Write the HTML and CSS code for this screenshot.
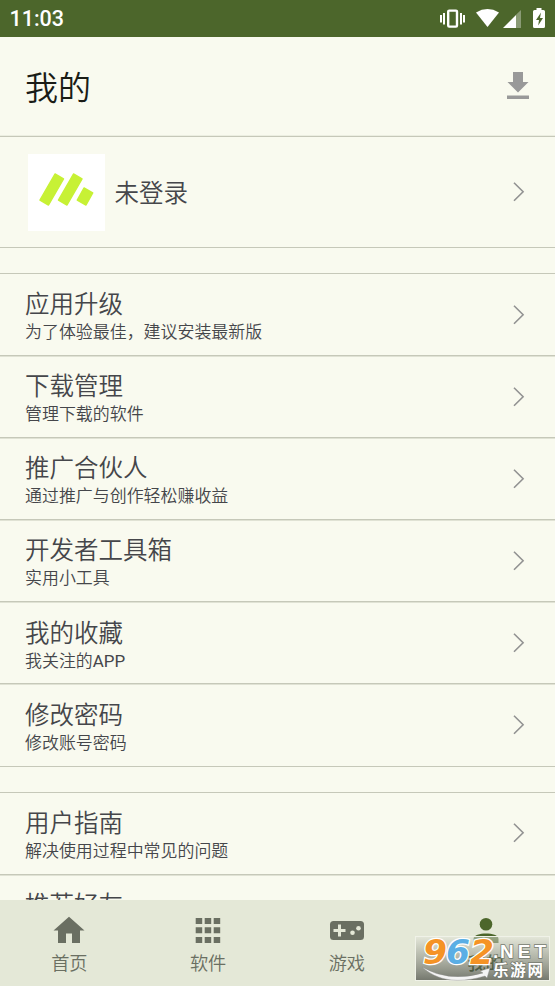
FILE: index.html
```html
<!DOCTYPE html>
<html lang="zh-CN">
<head>
<meta charset="utf-8">
<title>我的</title>
<link rel="stylesheet" href="styles.css">
</head>
<body>
<svg class="defs" width="0" height="0"><symbol id="chev" viewBox="0 0 12 20"><path d="M1 .7 10.100 9.700 1 18.700" fill="none" stroke="#929292" stroke-width="1.600"/></symbol></svg>
<div class="screen">
  <header class="status">
    <span class="time">11:03</span>
    <svg class="status-icons" width="110" height="24" viewBox="438 7 110 24" fill="#fff">
      <path d="M440 15h2v7.500h-2zM443 13h2v11.500h-2zM460 13h2v11.500h-2zM463 15h2v7.500h-2z"/>
      <rect x="448.200" y="10.600" width="8.800" height="16" rx="1" fill="none" stroke="#fff" stroke-width="2.400"/>
      <path d="M476 12.400Q487.500 5.600 499 12.400L487.500 27Z"/>
      <path d="M521 10v18h-5V14.800z" opacity=".35"/><path d="M516 15v13H503z"/>
      <path d="M536.500 8h5v2h2q1.500 0 1.500 1.500v15q0 1.500-1.500 1.500h-9q-1.500 0-1.500-1.500v-15q0-1.500 1.500-1.500h2z"/>
      <path d="M541 12.500 536 20h3l-.8 5.500L543 18h-3z" fill="#4c662b"/>
    </svg>
  </header>
  <div class="topbar">
    <h1>我的</h1>
    <svg width="24" height="28" viewBox="0 0 24 28" fill="#999"><path d="M7 0h10v10h5.500L12 20.500 1.500 10H7zM1 23.500h22v3.500H1z"/></svg>
  </div>
  <div class="profile">
    <svg class="avatar" width="77" height="77" viewBox="0 0 77 77"><path fill="#fff" d="M0 0h77v77H0z"/><g fill="#c7f135" stroke="#c7f135" stroke-width="1.500" stroke-linejoin="round"><path d="M27 20 35.500 25 20.500 51 12 46z"/><path d="M45.500 20 54 25 39 51 30.500 46z"/><path d="M56 34 64.700 39 58 51 49.300 46z"/></g></svg>
    <span class="name">未登录</span>
    <svg class="chev" width="12" height="20"><use href="#chev"/></svg>
  </div>
  <main class="content">
    <section class="group">
      <div class="row"><div><h2>应用升级</h2><p>为了体验最佳，建议安装最新版</p></div><svg class="chev" width="12" height="20"><use href="#chev"/></svg></div>
      <div class="row"><div><h2>下载管理</h2><p>管理下载的软件</p></div><svg class="chev" width="12" height="20"><use href="#chev"/></svg></div>
      <div class="row"><div><h2>推广合伙人</h2><p>通过推广与创作轻松赚收益</p></div><svg class="chev" width="12" height="20"><use href="#chev"/></svg></div>
      <div class="row"><div><h2>开发者工具箱</h2><p>实用小工具</p></div><svg class="chev" width="12" height="20"><use href="#chev"/></svg></div>
      <div class="row"><div><h2>我的收藏</h2><p>我关注的<span class="latin">APP</span></p></div><svg class="chev" width="12" height="20"><use href="#chev"/></svg></div>
      <div class="row"><div><h2>修改密码</h2><p>修改账号密码</p></div><svg class="chev" width="12" height="20"><use href="#chev"/></svg></div>
    </section>
    <section class="group">
      <div class="row"><div><h2>用户指南</h2><p>解决使用过程中常见的问题</p></div><svg class="chev" width="12" height="20"><use href="#chev"/></svg></div>
      <div class="row"><div><h2>推荐好友</h2></div></div>
    </section>
  </main>
  <nav class="tabs">
    <div class="tab"><svg width="36" height="28" viewBox="0 0 36 28"><path d="M18 .8 33.500 14.500H29V27h-8v-9.500h-6V27H7V14.500H2.500z"/></svg><span>首页</span></div>
    <div class="tab"><svg width="36" height="28" viewBox="0 0 36 28"><path d="M5.700 2h6.500v6H5.700zM14.700 2h6.500v6h-6.500zM23.700 2h6.500v6h-6.500zM5.700 11.300h6.500v6H5.700zM14.700 11.300h6.500v6h-6.500zM23.700 11.300h6.500v6h-6.500zM5.700 21h6.500v6H5.700zM14.700 21h6.500v6h-6.500zM23.700 21h6.500v6h-6.500z"/></svg><span>软件</span></div>
    <div class="tab"><svg width="36" height="28" viewBox="0 0 36 28"><rect x="1" y="5" width="34" height="19" rx="3.500"/><path d="M9 8.500h3V13h4.500v3H12v4.500H9V16H4.500v-3H9z" fill="#e4e8d7"/><circle cx="23.500" cy="16.700" r="2.300" fill="#e4e8d7"/><circle cx="29.500" cy="12.300" r="2.300" fill="#e4e8d7"/></svg><span>游戏</span></div>
    <div class="tab active"><svg width="36" height="28" viewBox="0 0 36 28"><circle cx="18" cy="8.300" r="6.300"/><path d="M5.500 27v-4C5.500 19 12 17.500 18 17.500S30.500 19 30.500 23v4z"/></svg><span>我的</span></div>
  </nav>
  <div class="watermark">
    <svg width="135" height="45" viewBox="0 0 135 45">
      <defs><linearGradient id="wm" x1="0" y1="0" x2="0" y2="1"><stop offset="0" stop-color="#e4e6dc" stop-opacity=".5"/><stop offset=".4" stop-color="#8f9288" stop-opacity=".5"/><stop offset="1" stop-color="#43463f" stop-opacity=".7"/></linearGradient></defs>
      <rect x=".5" y=".5" width="134" height="44" fill="url(#wm)" stroke="#f0f2e8"/>
      <path d="M7 31Q34 47 68 37l-3-2 10-3-3 10-2-2Q30 52 7 31z" fill="#f4f4f4" stroke="#888" stroke-width=".4"/>
      <g class="digits"><text x="8" y="28" textLength="24" lengthAdjust="spacingAndGlyphs" fill="#f59325">9</text><text x="31" y="28" textLength="24" lengthAdjust="spacingAndGlyphs" fill="#5aaee5">6</text><text x="55" y="28" textLength="24" lengthAdjust="spacingAndGlyphs" fill="#f59325">2</text></g>
      <text class="net" x="78" y="22" textLength="6">.</text><text class="net" x="85" y="22" textLength="46">NET</text>
      <text class="site" x="78" y="39.500" textLength="50">乐游网</text>
    </svg>
  </div>
</div>
</body>
</html>
```

FILE: styles.css
```css
* { box-sizing: border-box; }
body {
  margin: 0;
  font-family: "Noto Sans CJK SC", sans-serif;
  font-weight: 350;
  color: #45464a;
  background: #f9faef;
}
h1, h2, p { margin: 0; font-weight: inherit; }
svg { display: block; flex: none; }
.defs { position: absolute; }
.screen {
  position: relative;
  height: 986px;
  display: flex;
  flex-direction: column;
  overflow: hidden;
}
.status {
  flex: none;
  height: 37px;
  padding: 0 7px 0 9.500px;
  display: flex;
  align-items: center;
  justify-content: space-between;
  background: #4c662b;
  color: #fff;
}
.time { font: 500 21.500px/38px Roboto, sans-serif; }
.topbar {
  flex: none;
  height: 99px;
  padding: 0 25px 2px;
  display: flex;
  align-items: center;
  justify-content: space-between;
}
h1 { font-size: 33px; line-height: 48px; color: #1a1c16; }
.profile {
  flex: none;
  height: 112px;
  padding: 0 30px 0 28px;
  display: flex;
  align-items: center;
  border: solid #c6c8b9;
  border-width: 1px 0;
  box-shadow: 0 -1px #eceee1;
}
.name { margin-left: 9.500px; font-size: 24.500px; line-height: 34px; margin-top: -1px; }
.chev { margin-left: auto; }
.content { flex: 1; min-height: 0; overflow: hidden; }
.group { margin-top: 25px; border-bottom: 1px solid #c6c8b9; }
.row {
  height: 82.100px;
  padding: 13.200px 30px 0 25px;
  display: flex;
  align-items: flex-start;
  border-top: 1px solid #c6c8b9;
}
.row + .row { box-shadow: inset 0 1px #e0e2d4; }
.row .chev { margin-top: 17.500px; }
h2 { font-size: 24.500px; line-height: 32px; }
p { font-size: 16.950px; line-height: 24px; }
.latin { font-family: Roboto, sans-serif; font-weight: 400; }
.tabs {
  flex: none;
  height: 86px;
  display: grid;
  grid-template-columns: repeat(4, 1fr);
  background: #e4e8d7;
}
.tab {
  padding-top: 16px;
  display: flex;
  flex-direction: column;
  align-items: center;
  color: #6a6f62;
  fill: #6a6f62;
  font-size: 18.200px;
  line-height: 26px;
}
.tab span { margin-top: 5px; }
.tab.active { color: #2f4a12; fill: #4c662b; }
.tab.active span { font-weight: 500; }
.watermark { position: absolute; left: 415px; top: 936px; }
.digits {
  font: italic 700 33px "DejaVu Sans", sans-serif;
  stroke: #fff;
  stroke-width: 2.500px;
  paint-order: stroke;
}
.net {
  font: 700 19px "Liberation Sans", sans-serif;
  fill: #fff;
  stroke: #777b70;
  stroke-width: 1.500px;
  paint-order: stroke;
}
.site {
  font-size: 15.500px;
  font-weight: 700;
  fill: #fff;
  stroke: #777b70;
  stroke-width: 1.500px;
  paint-order: stroke;
}
```
